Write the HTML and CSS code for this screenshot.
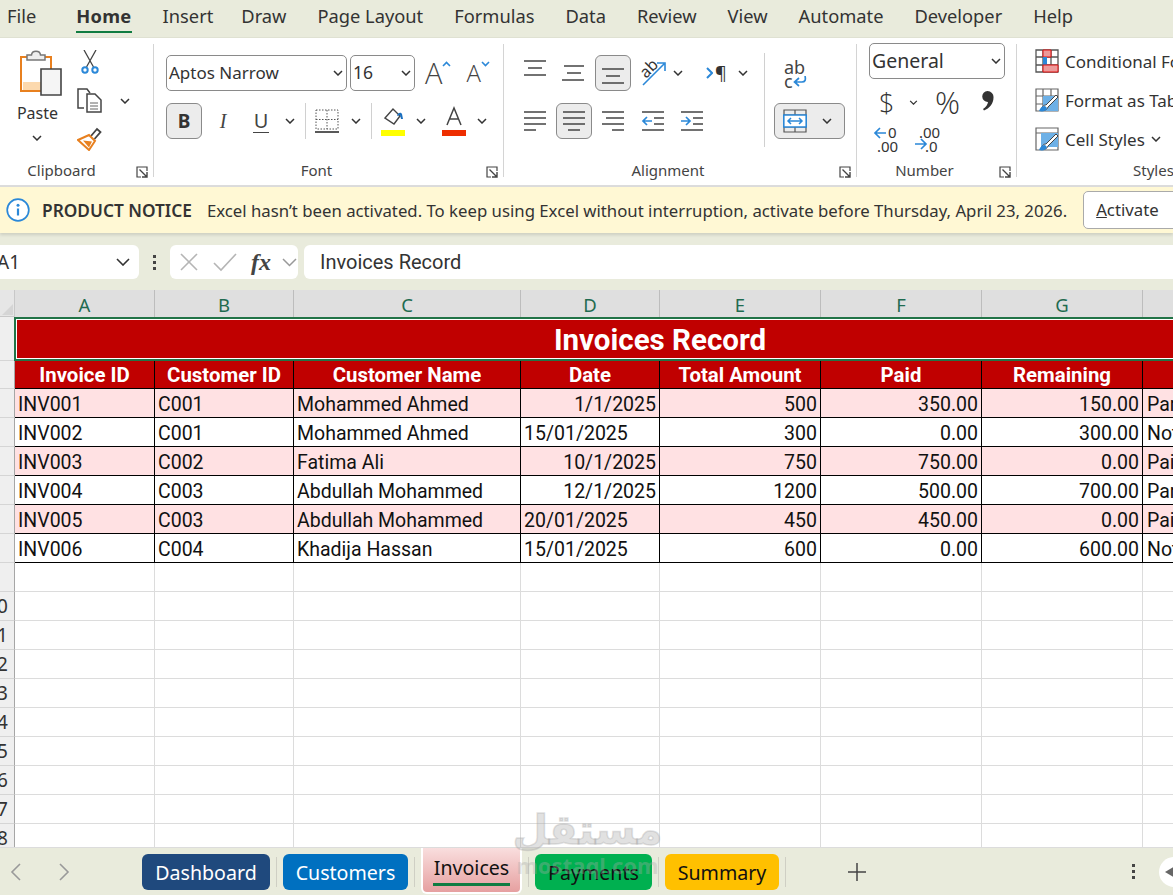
FILE: index.html
```html
<!DOCTYPE html>
<html lang="en">
<head>
<meta charset="utf-8">
<title>Invoices Record</title>
<link rel="stylesheet" href="styles.css">
</head>
<body>
<svg class="defs" width="0" height="0" aria-hidden="true">
  <symbol id="chev" viewBox="0 0 10 6"><path d="M1 1l4 4 4-4" fill="none" stroke="#333" stroke-width="1.5"/></symbol>
  <symbol id="launch" viewBox="0 0 12 12"><path d="M11 5V1H1v10h4" fill="none" stroke="#444" stroke-width="1.2"/><path d="M3.5 3.5l7 7M11 6v5H6" fill="none" stroke="#444" stroke-width="1.4"/></symbol>
</svg>

<nav class="menu">
  <span class="menu-item m-file">File</span>
  <span class="menu-item m-home">Home</span>
  <span class="menu-item m-insert">Insert</span>
  <span class="menu-item">Draw</span>
  <span class="menu-item">Page Layout</span>
  <span class="menu-item">Formulas</span>
  <span class="menu-item">Data</span>
  <span class="menu-item">Review</span>
  <span class="menu-item">View</span>
  <span class="menu-item">Automate</span>
  <span class="menu-item">Developer</span>
  <span class="menu-item">Help</span>
</nav>

<section class="ribbon">
  <div class="group g-clip">
    <div class="group-body clip-body">
      <div class="paste">
        <svg width="42" height="46" viewBox="0 0 42 46"><path d="M1 7h30v34H1z" fill="#fff" stroke="#e8801f" stroke-width="2"/><path d="M3 32h18v8H3z" fill="#fcd9ae"/><path d="M7 5h4.500c.5-5 8.500-5 9 0H25v5H7z" fill="#eee" stroke="#777" stroke-width="1.500"/><path d="M21 19h20v26H21z" fill="#f5f5f5" stroke="#444" stroke-width="1.600"/></svg>
        <span class="paste-label">Paste</span>
        <svg class="chev" width="10" height="6"><use href="#chev"/></svg>
      </div>
      <div class="clip-tools">
        <svg width="20" height="24" viewBox="0 0 20 24"><path d="M4 0l9.500 17M16 0L6.500 17" fill="none" stroke="#444" stroke-width="1.300"/><circle cx="5" cy="20" r="2.700" fill="none" stroke="#2b88d8" stroke-width="2"/><circle cx="15" cy="20" r="2.700" fill="none" stroke="#2b88d8" stroke-width="2"/></svg>
        <div class="copy-row">
          <svg width="25" height="25" viewBox="0 0 25 25"><path d="M7 20H1V1h9l3 4" fill="none" stroke="#444" stroke-width="1.500"/><path d="M10 6h8l6 6v12H10z" fill="#fff" stroke="#444" stroke-width="1.500"/><path d="M13 15h8M13 18h8M13 21h8" stroke="#666"/></svg>
          <svg class="chev copy-chev" width="10" height="6"><use href="#chev"/></svg>
        </div>
        <svg width="25" height="24" viewBox="0 0 25 24"><path d="M14 9l6-7 3.500 3-6 7" fill="#fff" stroke="#444" stroke-width="1.800"/><path d="M1 13l11-5 6 6-6 9z" fill="#fff" stroke="#e8801f" stroke-width="2"/><path d="M6 13.500l6 7 3-6z" fill="#e8801f"/></svg>
      </div>
    </div>
    <div class="group-label">Clipboard<svg class="launcher" width="12" height="12"><use href="#launch"/></svg></div>
  </div>

  <div class="group g-font">
    <div class="group-body font-body">
      <div class="row font-row1">
        <div class="select sel-font"><span>Aptos Narrow</span><svg width="10" height="6"><use href="#chev"/></svg></div>
        <div class="select sel-size"><span>16</span><svg width="10" height="6"><use href="#chev"/></svg></div>
        <span class="grow-a big">A<svg width="9" height="6" viewBox="0 0 9 6"><path d="M1 5l3.500-3.500L8 5" fill="none" stroke="#2b88d8" stroke-width="1.600"/></svg></span>
        <span class="grow-a small">A<svg width="9" height="6" viewBox="0 0 9 6"><path d="M1 1l3.500 3.500L8 1" fill="none" stroke="#2b88d8" stroke-width="1.600"/></svg></span>
      </div>
      <div class="row font-row2">
        <span class="btn btn-b">B</span>
        <span class="fmt-i">I</span>
        <span class="fmt-u">U</span>
        <svg class="chev c1" width="10" height="6"><use href="#chev"/></svg>
        <i class="vsep s1"></i>
        <svg class="ic-border" width="24" height="24" viewBox="0 0 24 24"><path d="M1 1h22v19H1zM12 1v19M1 10.500h22" fill="none" stroke="#555" stroke-dasharray="1.500 1.500"/><path d="M0 23h24" stroke="#222" stroke-width="1.500"/></svg>
        <svg class="chev c2" width="10" height="6"><use href="#chev"/></svg>
        <i class="vsep s2"></i>
        <svg class="ic-fill" width="24" height="30" viewBox="0 0 24 30"><path d="M4 12l8-9 7 7-6 8z" fill="#fff" stroke="#444" stroke-width="1.400"/><path d="M16 10c1-4 4-4 5-2l1 5-2 0-1-4" fill="#1a6fc0"/><path d="M0 24h24v6H0z" fill="#ffff00"/></svg>
        <svg class="chev c3" width="10" height="6"><use href="#chev"/></svg>
        <svg class="ic-color" width="24" height="30" viewBox="0 0 24 30"><path d="M5 19L12 2l7 17M7.500 13h9" fill="none" stroke="#444" stroke-width="1.500"/><path d="M0 24h24v6H0z" fill="#ee2e00"/></svg>
        <svg class="chev c4" width="10" height="6"><use href="#chev"/></svg>
      </div>
    </div>
    <div class="group-label">Font<svg class="launcher" width="12" height="12"><use href="#launch"/></svg></div>
  </div>

  <div class="group g-align">
    <div class="group-body align-body">
      <div class="align-main">
        <div class="row al-row1">
          <svg class="ic-top" width="24" height="16" viewBox="0 0 24 16"><path d="M1 1h22M5 8h14M1 15h22" stroke="#444" stroke-width="1.500"/></svg>
          <svg class="ic-mid" width="24" height="16" viewBox="0 0 24 16"><path d="M3 1h20M6 8h14M1 15h22" stroke="#444" stroke-width="1.500"/></svg>
          <span class="btn btn-sq"><svg width="24" height="16" viewBox="0 0 24 16"><path d="M1 1h22M5 8h14M1 15h22" stroke="#444" stroke-width="1.500"/></svg></span>
          <span class="orient"><svg width="26" height="26" viewBox="0 0 26 26"><path d="M3 25L24 4M17 3h8v8" fill="none" stroke="#2b88d8" stroke-width="1.600"/></svg><b class="ab">ab</b></span>
          <svg class="chev c5" width="10" height="6"><use href="#chev"/></svg>
          <span class="para"><svg width="7" height="12" viewBox="0 0 7 12"><path d="M1 1l5 5-5 5" fill="none" stroke="#2b88d8" stroke-width="2"/></svg>¶</span>
          <svg class="chev c6" width="10" height="6"><use href="#chev"/></svg>
        </div>
        <div class="row al-row2">
          <svg width="24" height="20" viewBox="0 0 24 20"><path d="M1 1h22M1 7h22M1 13h22M1 19h12" stroke="#444" stroke-width="1.500"/></svg>
          <span class="btn btn-sq b-center"><svg width="24" height="20" viewBox="0 0 24 20"><path d="M1 1h22M1 7h22M1 13h22M6 19h12" stroke="#444" stroke-width="1.500"/></svg></span>
          <svg class="ic-right" width="24" height="20" viewBox="0 0 24 20"><path d="M1 1h22M5 7h18M1 13h22M11 19h12" stroke="#444" stroke-width="1.500"/></svg>
          <svg class="ic-out" width="24" height="20" viewBox="0 0 24 20"><path d="M1 1h22M13 7h10M13 13h10M1 19h22" stroke="#444" stroke-width="1.500"/><path d="M11 10H2M6 6l-4 4 4 4" fill="none" stroke="#2b88d8" stroke-width="1.700"/></svg>
          <svg class="ic-in" width="24" height="20" viewBox="0 0 24 20"><path d="M1 1h22M13 7h10M13 13h10M1 19h22" stroke="#444" stroke-width="1.500"/><path d="M1 10h9M6 6l4 4-4 4" fill="none" stroke="#2b88d8" stroke-width="1.700"/></svg>
        </div>
      </div>
      <i class="vsep s3"></i>
      <div class="align-side">
        <div class="wrap-ic"><span class="wrap-ab">ab</span><span class="wrap-c">c<svg width="14" height="11" viewBox="0 0 14 11"><path d="M12 0c1 4 0 6-3 6H2M6 2L1.500 6 6 10" fill="none" stroke="#2b88d8" stroke-width="1.700"/></svg></span></div>
        <div class="btn merge"><svg width="24" height="24" viewBox="0 0 24 24"><path d="M1 1h22v22H1zM12 1v5M12 18v5M1 6h22M1 18h22" fill="none" stroke="#555" stroke-width="1.200"/><path d="M.8 6h22.400v12H.8z" fill="#fff" stroke="#2b88d8" stroke-width="1.600"/><path d="M5 12h14M8 9l-3 3 3 3M16 9l3 3-3 3" fill="none" stroke="#2b88d8" stroke-width="1.500"/></svg><svg width="10" height="6"><use href="#chev"/></svg></div>
      </div>
    </div>
    <div class="group-label">Alignment<svg class="launcher" width="12" height="12"><use href="#launch"/></svg></div>
  </div>

  <div class="group g-num">
    <div class="group-body num-body">
      <div class="select sel-num"><span>General</span><svg width="10" height="6"><use href="#chev"/></svg></div>
      <div class="row num-row2">
        <span class="sym dollar">$</span>
        <svg class="chev" width="9" height="5"><use href="#chev"/></svg>
        <span class="sym pct">%</span>
        <svg class="comma" width="13" height="20" viewBox="0 0 13 20"><path d="M6.500 0a6 6 0 0 1 6 6.500c0 6-4 11-9.500 13l-1-1.500c3-2 4.800-4.500 5-7A5.500 5.500 0 0 1 6.500 0z" fill="#333"/></svg>
      </div>
      <div class="row num-row3">
        <span class="dec"><svg width="14" height="12" viewBox="0 0 14 12"><path d="M13 6H2M7 1L2 6l5 5" fill="none" stroke="#2b88d8" stroke-width="1.700"/></svg><span class="d1">0</span><span class="d2">.00</span></span>
        <span class="dec dec-b"><span class="d3">.00</span><svg width="14" height="12" viewBox="0 0 14 12"><path d="M1 6h11M7 1l5 5-5 5" fill="none" stroke="#2b88d8" stroke-width="1.700"/></svg><span class="d4">.0</span></span>
      </div>
    </div>
    <div class="group-label">Number<svg class="launcher" width="12" height="12"><use href="#launch"/></svg></div>
  </div>

  <div class="group g-styles">
    <div class="group-body styles-body">
      <div class="style-item">
        <svg width="24" height="24" viewBox="0 0 24 24"><path d="M1 1h22v22H1zM8 1v22M16 1v22M1 8h22M1 16h22" fill="none" stroke="#555" stroke-width="1.300"/><path d="M8 1h8v7H8z" fill="#ec9a9a" stroke="#e01010"/><path d="M8 8h4v8H8z" fill="#2b88d8"/><path d="M8 16h15v7H8z" fill="#ec9a9a" stroke="#e01010"/></svg>
        <span>Conditional Formatting</span>
      </div>
      <div class="style-item">
        <svg width="24" height="24" viewBox="0 0 24 24"><path d="M1 1h22v22H1zM8 1v22M16 1v22M1 8h22M1 16h22" fill="none" stroke="#666" stroke-width="1.200"/><path d="M8 8h15v15H8z" fill="#6db0e6"/><path d="M6 22c1-4 3-5 5-5L21 7l2 2-10 10c-1 3-4 4-7 3z" fill="#fff" stroke="#444"/><path d="M4 23c1-3 3-5 6-5l2 2c-1 3-4 4-8 3z" fill="#2b88d8"/></svg>
        <span>Format as Table</span>
      </div>
      <div class="style-item">
        <svg width="24" height="24" viewBox="0 0 24 24"><path d="M1 1h22v22H1zM1 6h22" fill="none" stroke="#666" stroke-width="1.200"/><path d="M6 6h17v14H6z" fill="#6db0e6"/><path d="M6 22c1-4 3-5 5-5L21 7l2 2-10 10c-1 3-4 4-7 3z" fill="#fff" stroke="#444"/><path d="M4 23c1-3 3-5 6-5l2 2c-1 3-4 4-8 3z" fill="#2b88d8"/></svg>
        <span>Cell Styles</span>
        <svg class="style-chev" width="10" height="6"><use href="#chev"/></svg>
      </div>
    </div>
    <div class="group-label">Styles</div>
  </div>
</section>

<section class="notice">
  <svg class="notice-ic" width="24" height="24" viewBox="0 0 24 24"><circle cx="12" cy="12" r="10.800" fill="#fff" stroke="#2b88d8" stroke-width="1.700"/><path d="M12 10.500v7" stroke="#2b88d8" stroke-width="2.200"/><circle cx="12" cy="7.300" r="1.500" fill="#2b88d8"/></svg>
  <strong class="notice-title">PRODUCT NOTICE</strong>
  <span class="notice-text">Excel hasn’t been activated. To keep using Excel without interruption, activate before Thursday, April 23, 2026.</span>
  <span class="activate"><u>A</u>ctivate</span>
</section>

<section class="formula">
  <div class="namebox"><span>A1</span><svg width="14" height="8" viewBox="0 0 14 8"><path d="M1 1l6 6 6-6" fill="none" stroke="#333" stroke-width="1.600"/></svg></div>
  <div class="fdots"><i></i><i></i><i></i></div>
  <div class="fbtns">
    <svg width="20" height="20" viewBox="0 0 20 20"><path d="M2 2l16 16M18 2L2 18" stroke="#b5b5b5" stroke-width="1.600"/></svg>
    <svg class="f-check" width="24" height="20" viewBox="0 0 24 20"><path d="M1 11l7 7L23 2" fill="none" stroke="#b5b5b5" stroke-width="1.600"/></svg>
    <span class="fx">fx</span>
    <svg width="15" height="9" viewBox="0 0 15 9"><path d="M1 1l6.500 6.500L14 1" fill="none" stroke="#999" stroke-width="1.500"/></svg>
  </div>
  <div class="finput">Invoices Record</div>
</section>

<main class="sheet">
  <div class="grid">
    <div class="corner"><svg width="13" height="13" viewBox="0 0 13 13"><path d="M12 1v11H1z" fill="#d5d5d5"/></svg></div>
    <div class="ch">A</div><div class="ch">B</div><div class="ch">C</div><div class="ch">D</div><div class="ch">E</div><div class="ch">F</div><div class="ch">G</div><div class="ch">H</div>

    <div class="rh"></div>
    <div class="title">Invoices Record</div>

    <div class="rh"></div>
    <div class="hd">Invoice ID</div><div class="hd">Customer ID</div><div class="hd">Customer Name</div><div class="hd">Date</div><div class="hd">Total Amount</div><div class="hd">Paid</div><div class="hd">Remaining</div><div class="hd">Status</div>

    <div class="rh"></div>
    <div class="c pink">INV001</div><div class="c pink">C001</div><div class="c pink">Mohammed Ahmed</div><div class="c pink r">1/1/2025</div><div class="c pink r">500</div><div class="c pink r">350.00</div><div class="c pink r">150.00</div><div class="c pink">Partial</div>

    <div class="rh"></div>
    <div class="c">INV002</div><div class="c">C001</div><div class="c">Mohammed Ahmed</div><div class="c">15/01/2025</div><div class="c r">300</div><div class="c r">0.00</div><div class="c r">300.00</div><div class="c">Not Paid</div>

    <div class="rh"></div>
    <div class="c pink">INV003</div><div class="c pink">C002</div><div class="c pink">Fatima Ali</div><div class="c pink r">10/1/2025</div><div class="c pink r">750</div><div class="c pink r">750.00</div><div class="c pink r">0.00</div><div class="c pink">Paid</div>

    <div class="rh"></div>
    <div class="c">INV004</div><div class="c">C003</div><div class="c">Abdullah Mohammed</div><div class="c r">12/1/2025</div><div class="c r">1200</div><div class="c r">500.00</div><div class="c r">700.00</div><div class="c">Partial</div>

    <div class="rh"></div>
    <div class="c pink">INV005</div><div class="c pink">C003</div><div class="c pink">Abdullah Mohammed</div><div class="c pink">20/01/2025</div><div class="c pink r">450</div><div class="c pink r">450.00</div><div class="c pink r">0.00</div><div class="c pink">Paid</div>

    <div class="rh"></div>
    <div class="c">INV006</div><div class="c">C004</div><div class="c">Khadija Hassan</div><div class="c">15/01/2025</div><div class="c r">600</div><div class="c r">0.00</div><div class="c r">600.00</div><div class="c">Not Paid</div>

    <div class="rh"></div>
    <div class="e"></div><div class="e"></div><div class="e"></div><div class="e"></div><div class="e"></div><div class="e"></div><div class="e"></div><div class="e"></div>
    <div class="rh"><span class="rn">10</span></div>
    <div class="e"></div><div class="e"></div><div class="e"></div><div class="e"></div><div class="e"></div><div class="e"></div><div class="e"></div><div class="e"></div>
    <div class="rh"><span class="rn">11</span></div>
    <div class="e"></div><div class="e"></div><div class="e"></div><div class="e"></div><div class="e"></div><div class="e"></div><div class="e"></div><div class="e"></div>
    <div class="rh"><span class="rn">12</span></div>
    <div class="e"></div><div class="e"></div><div class="e"></div><div class="e"></div><div class="e"></div><div class="e"></div><div class="e"></div><div class="e"></div>
    <div class="rh"><span class="rn">13</span></div>
    <div class="e"></div><div class="e"></div><div class="e"></div><div class="e"></div><div class="e"></div><div class="e"></div><div class="e"></div><div class="e"></div>
    <div class="rh"><span class="rn">14</span></div>
    <div class="e"></div><div class="e"></div><div class="e"></div><div class="e"></div><div class="e"></div><div class="e"></div><div class="e"></div><div class="e"></div>
    <div class="rh"><span class="rn">15</span></div>
    <div class="e"></div><div class="e"></div><div class="e"></div><div class="e"></div><div class="e"></div><div class="e"></div><div class="e"></div><div class="e"></div>
    <div class="rh"><span class="rn">16</span></div>
    <div class="e"></div><div class="e"></div><div class="e"></div><div class="e"></div><div class="e"></div><div class="e"></div><div class="e"></div><div class="e"></div>
    <div class="rh"><span class="rn">17</span></div>
    <div class="e"></div><div class="e"></div><div class="e"></div><div class="e"></div><div class="e"></div><div class="e"></div><div class="e"></div><div class="e"></div>
    <div class="rh"><span class="rn">18</span></div>
    <div class="e"></div><div class="e"></div><div class="e"></div><div class="e"></div><div class="e"></div><div class="e"></div><div class="e"></div><div class="e"></div>
  </div>
</main>

<footer class="tabs">
  <svg class="nav-l" width="11" height="18" viewBox="0 0 11 18"><path d="M10 1L2 9l8 8" fill="none" stroke="#999" stroke-width="1.600"/></svg>
  <svg class="nav-r" width="11" height="18" viewBox="0 0 11 18"><path d="M1 1l8 8-8 8" fill="none" stroke="#999" stroke-width="1.600"/></svg>
  <span class="tab t-dash">Dashboard</span><i class="tsep"></i>
  <span class="tab t-cust">Customers</span><i class="tsep"></i>
  <span class="tab t-inv"><span class="t-inv-label">Invoices</span></span><i class="tsep"></i>
  <span class="tab t-pay">Payments</span><i class="tsep"></i>
  <span class="tab t-sum">Summary</span><i class="tsep"></i>
  <svg class="plus" width="18" height="18" viewBox="0 0 18 18"><path d="M9 0v18M0 9h18" stroke="#444" stroke-width="1.500"/></svg>
  <div class="tdots"><i></i><i></i><i></i></div>
  <div class="tround"><svg width="12" height="14" viewBox="0 0 12 14"><path d="M0 7l12-7v14z" fill="#666"/></svg></div>
</footer>

<div class="watermark"><span class="wm-ar">مستقل</span><span class="wm-en">mostaql.com</span></div>
</body>
</html>
```

FILE: styles.css
```css
* { box-sizing: border-box; }
html, body { margin: 0; padding: 0; height: 895px; overflow: hidden; }
body { position: relative; width: 1173px; background: #fff; font-family: "Noto Sans", "Open Sans", sans-serif; color: #333; }
.defs { position: absolute; }
i { display: block; font-style: normal; }
svg { display: block; flex: none; }

.menu { height: 38px; background: #e9ebdc; display: flex; align-items: flex-start; border-bottom: 1px solid #dfe1d2; font-size: 18.3px; color: #333; padding-left: 7px; }
.menu-item { display: block; height: 33px; line-height: 32px; margin-right: 31px; white-space: nowrap; }
.m-file { margin-right: 40px; }
.m-home { font-weight: 700; letter-spacing: .3px; border-bottom: 2px solid #107c41; height: 33px; }
.m-insert { margin-right: 28px; }

.ribbon { height: 149px; display: flex; padding: 6px 0 8px; background: #fff; border-bottom: 2px solid #dcdcdc; overflow: hidden; }
.group { position: relative; display: flex; flex-direction: column; flex: none; border-right: 1px solid #d4d4d4; }
.group-body { flex: 1; min-height: 0; }
.group-label { height: 14px; line-height: 15px; text-align: center; font-size: 15px; color: #444; padding-right: 24px; }
.g-clip .group-label { padding-right: 30px; }
.launcher { position: absolute; right: 5px; bottom: -1px; }
.row { display: flex; align-items: center; }
.select { display: flex; align-items: center; justify-content: space-between; border: 1px solid #8a8a8a; border-radius: 5px; background: #fff; color: #333; padding: 0 3px 0 2px; white-space: nowrap; }
.select span { margin-top: -2px; }
.btn { display: flex; align-items: center; justify-content: center; background: #ececec; border: 1px solid #8a8a8a; border-radius: 6px; flex: none; }
.vsep { width: 1px; background: #d0d0d0; flex: none; }

.g-clip { width: 154px; }
.clip-body { display: flex; padding: 6px 0 0 20px; }
.paste { width: 42px; display: flex; flex-direction: column; align-items: center; }
.paste-label { font-size: 16px; line-height: 22px; margin: 6px 0 0 -7px; white-space: nowrap; }
.paste .chev { margin: 11px 0 0 -8px; }
.clip-tools { margin-left: 15px; display: flex; flex-direction: column; gap: 14px; align-items: flex-start; }
.clip-tools > svg:first-child { margin-left: 3px; }
.copy-row { display: flex; align-items: center; }
.copy-chev { margin-left: 18px; }

.g-font { width: 350px; }
.font-body { padding: 11px 0 0 12px; }
.font-row1 { height: 36px; }
.sel-font { width: 181px; height: 36px; font-size: 17px; }
.sel-size { width: 65px; height: 36px; margin-left: 3px; font-size: 17.5px; }
.grow-a { display: flex; font-size: 29px; font-weight: 300; line-height: 36px; color: #444; font-family: "Open Sans", sans-serif; }
.grow-a svg { margin-top: 6px; }
.grow-a.big { margin-left: 10px; }
.grow-a.small { font-size: 24px; margin-left: 15px; }
.font-row2 { height: 36px; margin-top: 12px; }
.btn-b { width: 36px; height: 36px; font-weight: 700; font-size: 19px; color: #333; font-family: "Noto Sans", sans-serif; }
.fmt-i { width: 16px; margin-left: 13px; text-align: center; font-style: italic; font-size: 20px; font-family: "Liberation Serif", serif; color: #444; }
.fmt-u { width: 16px; margin-left: 22px; text-align: center; font-size: 20px; line-height: 22px; border-bottom: 1.5px solid #444; color: #444; }
.c1 { margin-left: 16px; }
.s1 { height: 36px; margin-left: 10px; }
.ic-border { margin-left: 9px; }
.c2 { margin-left: 12px; }
.s2 { height: 36px; margin-left: 10px; }
.ic-fill { margin-left: 9px; }
.c3 { margin-left: 11px; }
.ic-color { margin-left: 16px; }
.c4 { margin-left: 11px; }

.g-align { width: 353px; }
.align-body { display: flex; padding: 9px 0 0 19px; }
.align-main { width: 241px; }
.al-row1 { height: 36px; margin: 2px 0 12px; }
.ic-top { margin: -10px 0 0 0; }
.ic-mid { margin: 0 0 0 14px; }
.btn-sq { width: 36px; height: 36px; }
.al-row1 .btn-sq { margin-left: 10px; align-items: flex-end; padding-bottom: 6px; }
.orient { position: relative; display: block; width: 26px; height: 26px; margin-left: 9px; }
.ab { position: absolute; left: -1px; top: 0; font-weight: 400; font-size: 16px; line-height: 16px; transform: rotate(-45deg); color: #333; }
.c5 { margin-left: 7px; }
.para { display: flex; align-items: center; margin-left: 23px; gap: 2px; font-size: 18px; color: #333; }
.c6 { margin-left: 11px; }
.al-row2 { height: 36px; }
.b-center { margin-left: 9px; }
.ic-right { margin-left: 9px; }
.ic-out { margin-left: 16px; }
.ic-in { margin-left: 15px; }
.s3 { height: 94px; }
.align-side { margin-left: 9px; }
.wrap-ic { height: 50px; padding: 7px 0 0 10px; color: #444; font-size: 18px; line-height: 14px; }
.wrap-ab { display: block; }
.wrap-c { display: flex; align-items: center; }
.merge { width: 71px; height: 36px; justify-content: flex-start; gap: 15px; padding-left: 8px; }

.g-num { width: 160px; }
.num-body { padding: 0 0 0 12px; margin-top: -1px; }
.sel-num { width: 136px; height: 36px; font-size: 19.5px; }
.num-row2 { height: 40px; margin-top: 3px; padding-left: 10px; }
.sym { color: #333; font-family: "Open Sans", sans-serif; }
.dollar { font-size: 27px; width: 20px; font-weight: 300; }
.num-row2 .chev { margin-left: 10px; }
.pct { font-size: 31px; margin-left: 17px; font-weight: 300; }
.comma { margin-left: 21px; margin-top: -2px; }
.num-row3 { padding-left: 4px; gap: 15px; }
.dec { position: relative; display: block; width: 26px; height: 36px; font-size: 15px; line-height: 14px; color: #333; }
.dec svg { position: absolute; left: 0; top: 5px; }
.d1 { position: absolute; left: 15px; top: 3px; }
.d2 { position: absolute; left: 4px; top: 17px; }
.d3 { position: absolute; left: 5px; top: 3px; }
.dec-b svg { top: 16px; }
.d4 { position: absolute; left: 11px; top: 17px; }

.g-styles { width: 156px; border-right: 0; }
.styles-body { padding: 5px 0 0 18px; display: flex; flex-direction: column; gap: 15px; width: 320px; }
.style-item { display: flex; align-items: center; height: 24px; gap: 6px; font-size: 17px; color: #333; white-space: nowrap; }
.style-chev { margin-left: 0; }
.g-styles .group-label { text-align: left; padding-left: 116px; padding-right: 0; white-space: nowrap; }

.notice { height: 46px; background: #fff8d4; display: flex; align-items: center; padding-left: 6px; font-size: 16.75px; color: #333; box-shadow: 0 2px 3px rgba(0,0,0,.12); position: relative; white-space: nowrap; }
.notice-title { margin-left: 12px; font-weight: 600; font-size: 17.3px; }
.notice-text { margin-left: 15px; }
.activate { display: block; flex: none; width: 110px; height: 38px; margin-left: 16px; border: 1px solid #aaa; border-radius: 5px; background: #fff; padding-left: 12px; line-height: 36px; }

.formula { height: 57px; background: #e9ebdc; display: flex; padding-top: 12px; align-items: flex-start; }
.namebox { width: 139px; height: 34px; background: #fff; border-radius: 0 6px 6px 0; display: flex; align-items: center; justify-content: space-between; font-size: 19px; padding-right: 9px; overflow: hidden; }
.namebox span { margin-left: -3px; }
.fdots { width: 31px; height: 34px; display: flex; flex-direction: column; align-items: center; justify-content: center; gap: 3px; }
.fdots i { width: 3px; height: 3px; background: #444; }
.fbtns { width: 128px; height: 34px; background: #fff; border-radius: 6px; display: flex; align-items: center; padding-left: 9px; }
.f-check { margin-left: 14px; }
.fx { font-family: "Liberation Serif", serif; font-style: italic; font-weight: 700; font-size: 24px; color: #444; width: 26px; margin-left: 14px; }
.fbtns svg:last-child { margin-left: 5px; }
.finput { flex: 1; height: 34px; background: #fff; margin-left: 6px; border-radius: 6px 0 0 6px; padding-left: 16px; font-family: "Roboto", sans-serif; font-size: 20px; line-height: 34px; color: #333; }

.sheet { height: 557px; overflow: hidden; background: #fff; }
.grid { display: grid; width: 1304px; grid-template-columns: 15px 140px 139px 227px 139px 161px 161px 161px 161px; grid-template-rows: 27px 44px 28px repeat(16, 29px); font-family: "Roboto", sans-serif; }
.corner { background: #e6e6e6; border-right: 1px solid #c8c8c8; border-bottom: 1px solid #c8c8c8; padding: 13px 0 0 1px; }
.ch { background: #dfdfdf; border-right: 1px solid #bdbdbd; color: #1f6b50; font-family: "Noto Sans", sans-serif; font-size: 18.5px; text-align: center; line-height: 30px; }
.rh { background: #efefef; border-right: 1px solid #a6a6a6; border-bottom: 1px solid #d5d5d5; color: #333; font-size: 19px; line-height: 29px; font-family: "Noto Sans", sans-serif; white-space: nowrap; }
.rn { display: block; width: 30px; margin-left: -18px; text-align: center; }
.title { grid-column: 2 / -1; background: #c00000; color: #fff; font-weight: 700; font-size: 29.5px; line-height: 43px; text-align: center; border: 2px solid #217346; border-right: 0; margin-left: -1px; outline: 1px solid #fff; outline-offset: -3px; }
.hd { background: #c00000; color: #fff; font-weight: 700; font-size: 20.4px; line-height: 28px; text-align: center; border-right: 1px solid #000; border-bottom: 1px solid #000; white-space: nowrap; overflow: hidden; }
.c { font-size: 19.5px; line-height: 31px; padding: 0 3px; color: #111; border-right: 1px solid #000; border-bottom: 1px solid #000; white-space: nowrap; overflow: hidden; }
.grid .c:nth-child(9n+2) { padding-left: 4px; }
.pink { background: #ffe1e3; }
.r { text-align: right; }
.e { border-right: 1px solid #dcdcdc; border-bottom: 1px solid #dcdcdc; }

.tabs { height: 48px; background: #e9ebdc; display: flex; align-items: center; position: relative; border-top: 1px solid #dcdcdc; }
.nav-l { margin-left: 10px; }
.nav-r { margin-left: 38px; }
.tab { display: flex; align-items: center; justify-content: center; height: 36px; border-radius: 6px; padding-top: 1px; font-size: 19.6px; flex: none; white-space: nowrap; font-family: "Noto Sans", sans-serif; }
.tsep { width: 1px; height: 30px; background: #cfcfc4; margin: 0 6px; flex: none; }
.t-dash { width: 128px; margin-left: 72px; background: #1f497d; color: #fff; }
.t-cust { width: 125px; background: #0070c0; color: #fff; }
.t-inv { width: 101px; height: 46px; margin-top: -2px; color: #111; background: linear-gradient(#f9dede, #e6a0a0); border: 2px solid #fff; border-top: 0; border-radius: 0 0 6px 6px; align-items: flex-start; padding-top: 5px; }
.t-inv-label { border-bottom: 3px solid #107c41; width: 77px; text-align: center; line-height: 30px; height: 33px; }
.t-pay { width: 117px; background: #00b050; color: #111; }
.t-sum { width: 114px; background: #ffc000; color: #111; }
.plus { margin-left: 56px; }
.tdots { margin-left: 266px; display: flex; flex-direction: column; gap: 3px; }
.tdots i { width: 3px; height: 3px; background: #444; }
.tround { margin-left: 24px; width: 30px; height: 30px; flex: none; border-radius: 50%; background: #fff; display: flex; align-items: center; padding-left: 6px; }

.watermark { position: absolute; left: 500px; top: 806px; width: 175px; display: flex; flex-direction: column; align-items: center; pointer-events: none; color: rgba(170,170,170,.36); font-weight: 700; }
.wm-ar { font-family: "DejaVu Sans", sans-serif; font-size: 41px; line-height: 48px; -webkit-text-stroke: 1.5px rgba(170,170,170,.36); }
.wm-en { font-family: "Noto Sans", sans-serif; font-size: 22px; line-height: 22px; }
```
